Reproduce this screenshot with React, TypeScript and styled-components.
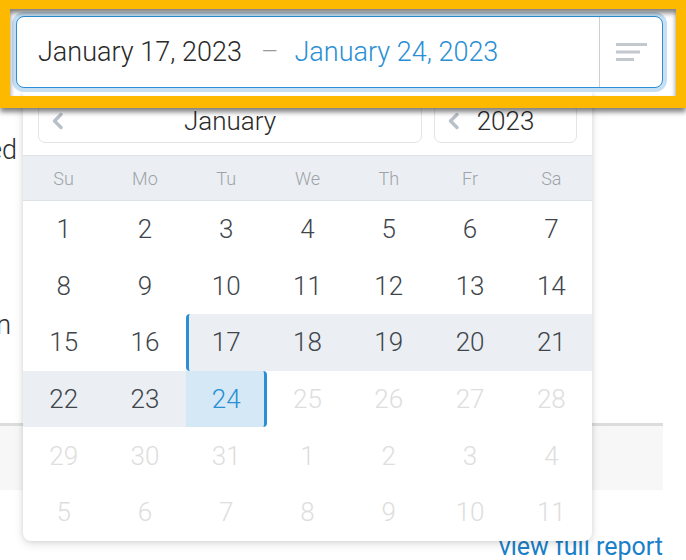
import React from "react";
import styled, { createGlobalStyle, css } from "styled-components";

const GlobalStyle = createGlobalStyle`
  html, body {
    margin: 0;
    padding: 0;
    background: #ffffff;
  }
  body {
    font-family: Roboto, "Noto Sans", "Liberation Sans", sans-serif;
    font-weight: 300;
    color: #333;
  }
`;

const Stage = styled.div`
  position: relative;
  width: 686px;
  height: 560px;
  overflow: hidden;
  background: #fff;
`;

/* page that sits behind the open picker */
const Page = styled.div`
  display: flex;
  flex-direction: column;
  width: 663px;
  padding-top: 133px;
`;

const CutWord = styled.div<{ $width: number; $gap: number }>`
  display: flex;
  justify-content: flex-end;
  width: ${(p) => p.$width}px;
  margin-top: ${(p) => p.$gap}px;
  overflow: hidden;
  font-size: 27px;
  line-height: 34px;
  color: #2e2e2e;

  span {
    flex-shrink: 0;
    white-space: nowrap;
  }
`;

const Strip = styled.div`
  margin-top: 81px;
  height: 64px;
  border-top: 3px solid #dcdcdc;
  background: #f7f7f7;
`;

const LinkRow = styled.div`
  display: flex;
  justify-content: flex-end;
  margin-top: 42px;
`;

const ReportLink = styled.a`
  font-size: 25px;
  font-weight: 400;
  color: #1a80c8;
  text-decoration: none;
`;

/* date range picker */
const Picker = styled.div`
  position: absolute;
  top: 16px;
  left: 16px;
  width: 647px;
`;

const Field = styled.div`
  position: relative;
  z-index: 2;
  display: flex;
  align-items: stretch;
  height: 70px;
  border: 1px solid #2a8fd4;
  border-radius: 8px;
  background: #fff;
  box-shadow: 0 0 0 4px #c6dff2;
`;

const Dates = styled.div`
  flex: 1;
  display: flex;
  align-items: center;
  padding-left: 21px;
  font-size: 27px;
`;

const DateText = styled.span<{ $accent?: boolean }>`
  color: ${(p) => (p.$accent ? "#2a8fd4" : "#2a2a2a")};
`;

const Dash = styled.span`
  margin: 0 16px 0 19px;
  color: #9a9a9a;
`;

const IconCell = styled.div`
  display: flex;
  align-items: center;
  justify-content: center;
  width: 62px;
  border-left: 1px solid #cfcfcf;
`;

const Dropdown = styled.div`
  position: absolute;
  z-index: 1;
  top: 76px;
  left: 7px;
  width: 569px;
  padding-top: 12px;
  background: #fff;
  border-radius: 0 0 8px 8px;
  box-shadow: 0 3px 10px rgba(0, 0, 0, 0.13), 0 0 5px rgba(0, 0, 0, 0.08);
`;

const SelectRow = styled.div`
  display: grid;
  grid-template-columns: 1fr 143px;
  gap: 12px;
  padding: 0 15px;
`;

const SelectBox = styled.div`
  display: grid;
  grid-template-columns: 1fr auto 1fr;
  align-items: center;
  height: 32px;
  padding: 0 12px 5px;
  border: 1px solid #e2e4e6;
  border-radius: 7px;
  font-size: 26px;
  color: #2a2a2a;

  svg {
    justify-self: start;
  }
`;

const WeekHeader = styled.div`
  display: grid;
  grid-template-columns: repeat(7, 1fr);
  height: 44px;
  margin-top: 12px;
  border-top: 1px solid #dde2e7;
  border-bottom: 1px solid #dde2e7;
  background: #ebeff3;
`;

const WeekDay = styled.div`
  display: flex;
  align-items: center;
  justify-content: center;
  font-size: 18px;
  color: #9ea3a8;
`;

const DayGrid = styled.div`
  display: grid;
  grid-template-columns: repeat(7, 1fr);
  grid-auto-rows: 56.6px;
`;

const DayCell = styled.div<{
  $muted?: boolean;
  $range?: boolean;
  $start?: boolean;
  $end?: boolean;
}>`
  display: flex;
  align-items: center;
  justify-content: center;
  font-size: 26px;
  color: ${(p) => (p.$muted ? "#dedede" : "#40454b")};
  ${(p) =>
    p.$range &&
    css`
      background: #ebeff3;
    `}
  ${(p) =>
    p.$start &&
    css`
      border-left: 3px solid #2a8fd4;
      border-radius: 4px 0 0 4px;
      padding-right: 3px;
    `}
  ${(p) =>
    p.$end &&
    css`
      background: #d5e8f6;
      color: #2a8fd4;
      border-right: 3px solid #2a8fd4;
      border-radius: 0 4px 4px 0;
      padding-left: 3px;
    `}
`;

/* yellow highlight drawn over the field */
const Frame = styled.div`
  position: absolute;
  z-index: 5;
  top: 0;
  left: 0;
  width: 666px;
  height: 87px;
  border-style: solid;
  border-color: #fdb900;
  border-width: 9px 10px 12px 10px;
  pointer-events: none;
  box-shadow: 0 4px 5px rgba(0, 0, 0, 0.5), inset 0 4px 5px rgba(0, 0, 0, 0.5);
`;

const SortIcon = () => (
  <svg width="31" height="18" viewBox="0 0 31 18">
    <rect x="0" y="0" width="31" height="3" fill="#c3c8cd" />
    <rect x="0" y="7.5" width="24" height="3" fill="#c3c8cd" />
    <rect x="0" y="15" width="18" height="3" fill="#c3c8cd" />
  </svg>
);

const ChevronLeft = () => (
  <svg width="13" height="18" viewBox="0 0 13 18">
    <path d="M10 2.5 L3.5 9 L10 15.5" fill="none" stroke="#b9c0c7" strokeWidth="3.4" strokeLinecap="round" strokeLinejoin="round" />
  </svg>
);

const weekDays = ["Su", "Mo", "Tu", "We", "Th", "Fr", "Sa"];

interface IDay {
  n: number;
  muted?: boolean;
}

const buildDays = (): IDay[] => {
  const days: IDay[] = [];
  for (let i = 1; i <= 31; i++) days.push({ n: i, muted: i > 24 });
  for (let i = 1; i <= 11; i++) days.push({ n: i, muted: true });
  return days;
};

export default function App() {
  const days = buildDays();

  return (
    <>
      <GlobalStyle />
      <Stage>
        <Page>
          <CutWord $width={17} $gap={0}>
            <span>Created</span>
          </CutWord>
          <CutWord $width={11} $gap={141}>
            <span>Open</span>
          </CutWord>
          <Strip />
          <LinkRow>
            <ReportLink href="#">view full report</ReportLink>
          </LinkRow>
        </Page>

        <Picker>
          <Field>
            <Dates>
              <DateText>January 17, 2023</DateText>
              <Dash>–</Dash>
              <DateText $accent>January 24, 2023</DateText>
            </Dates>
            <IconCell>
              <SortIcon />
            </IconCell>
          </Field>

          <Dropdown>
            <SelectRow>
              <SelectBox>
                <ChevronLeft />
                <span>January</span>
                <span />
              </SelectBox>
              <SelectBox>
                <ChevronLeft />
                <span>2023</span>
                <span />
              </SelectBox>
            </SelectRow>
            <WeekHeader>
              {weekDays.map((d) => (
                <WeekDay key={d}>{d}</WeekDay>
              ))}
            </WeekHeader>
            <DayGrid>
              {days.map((d, i) => {
                const inMonth = i < 31;
                const range = inMonth && d.n >= 17 && d.n <= 24;
                return (
                  <DayCell
                    key={i}
                    $muted={d.muted}
                    $range={range}
                    $start={inMonth && d.n === 17}
                    $end={inMonth && d.n === 24}
                  >
                    {d.n}
                  </DayCell>
                );
              })}
            </DayGrid>
          </Dropdown>
        </Picker>

        <Frame />
      </Stage>
    </>
  );
}
